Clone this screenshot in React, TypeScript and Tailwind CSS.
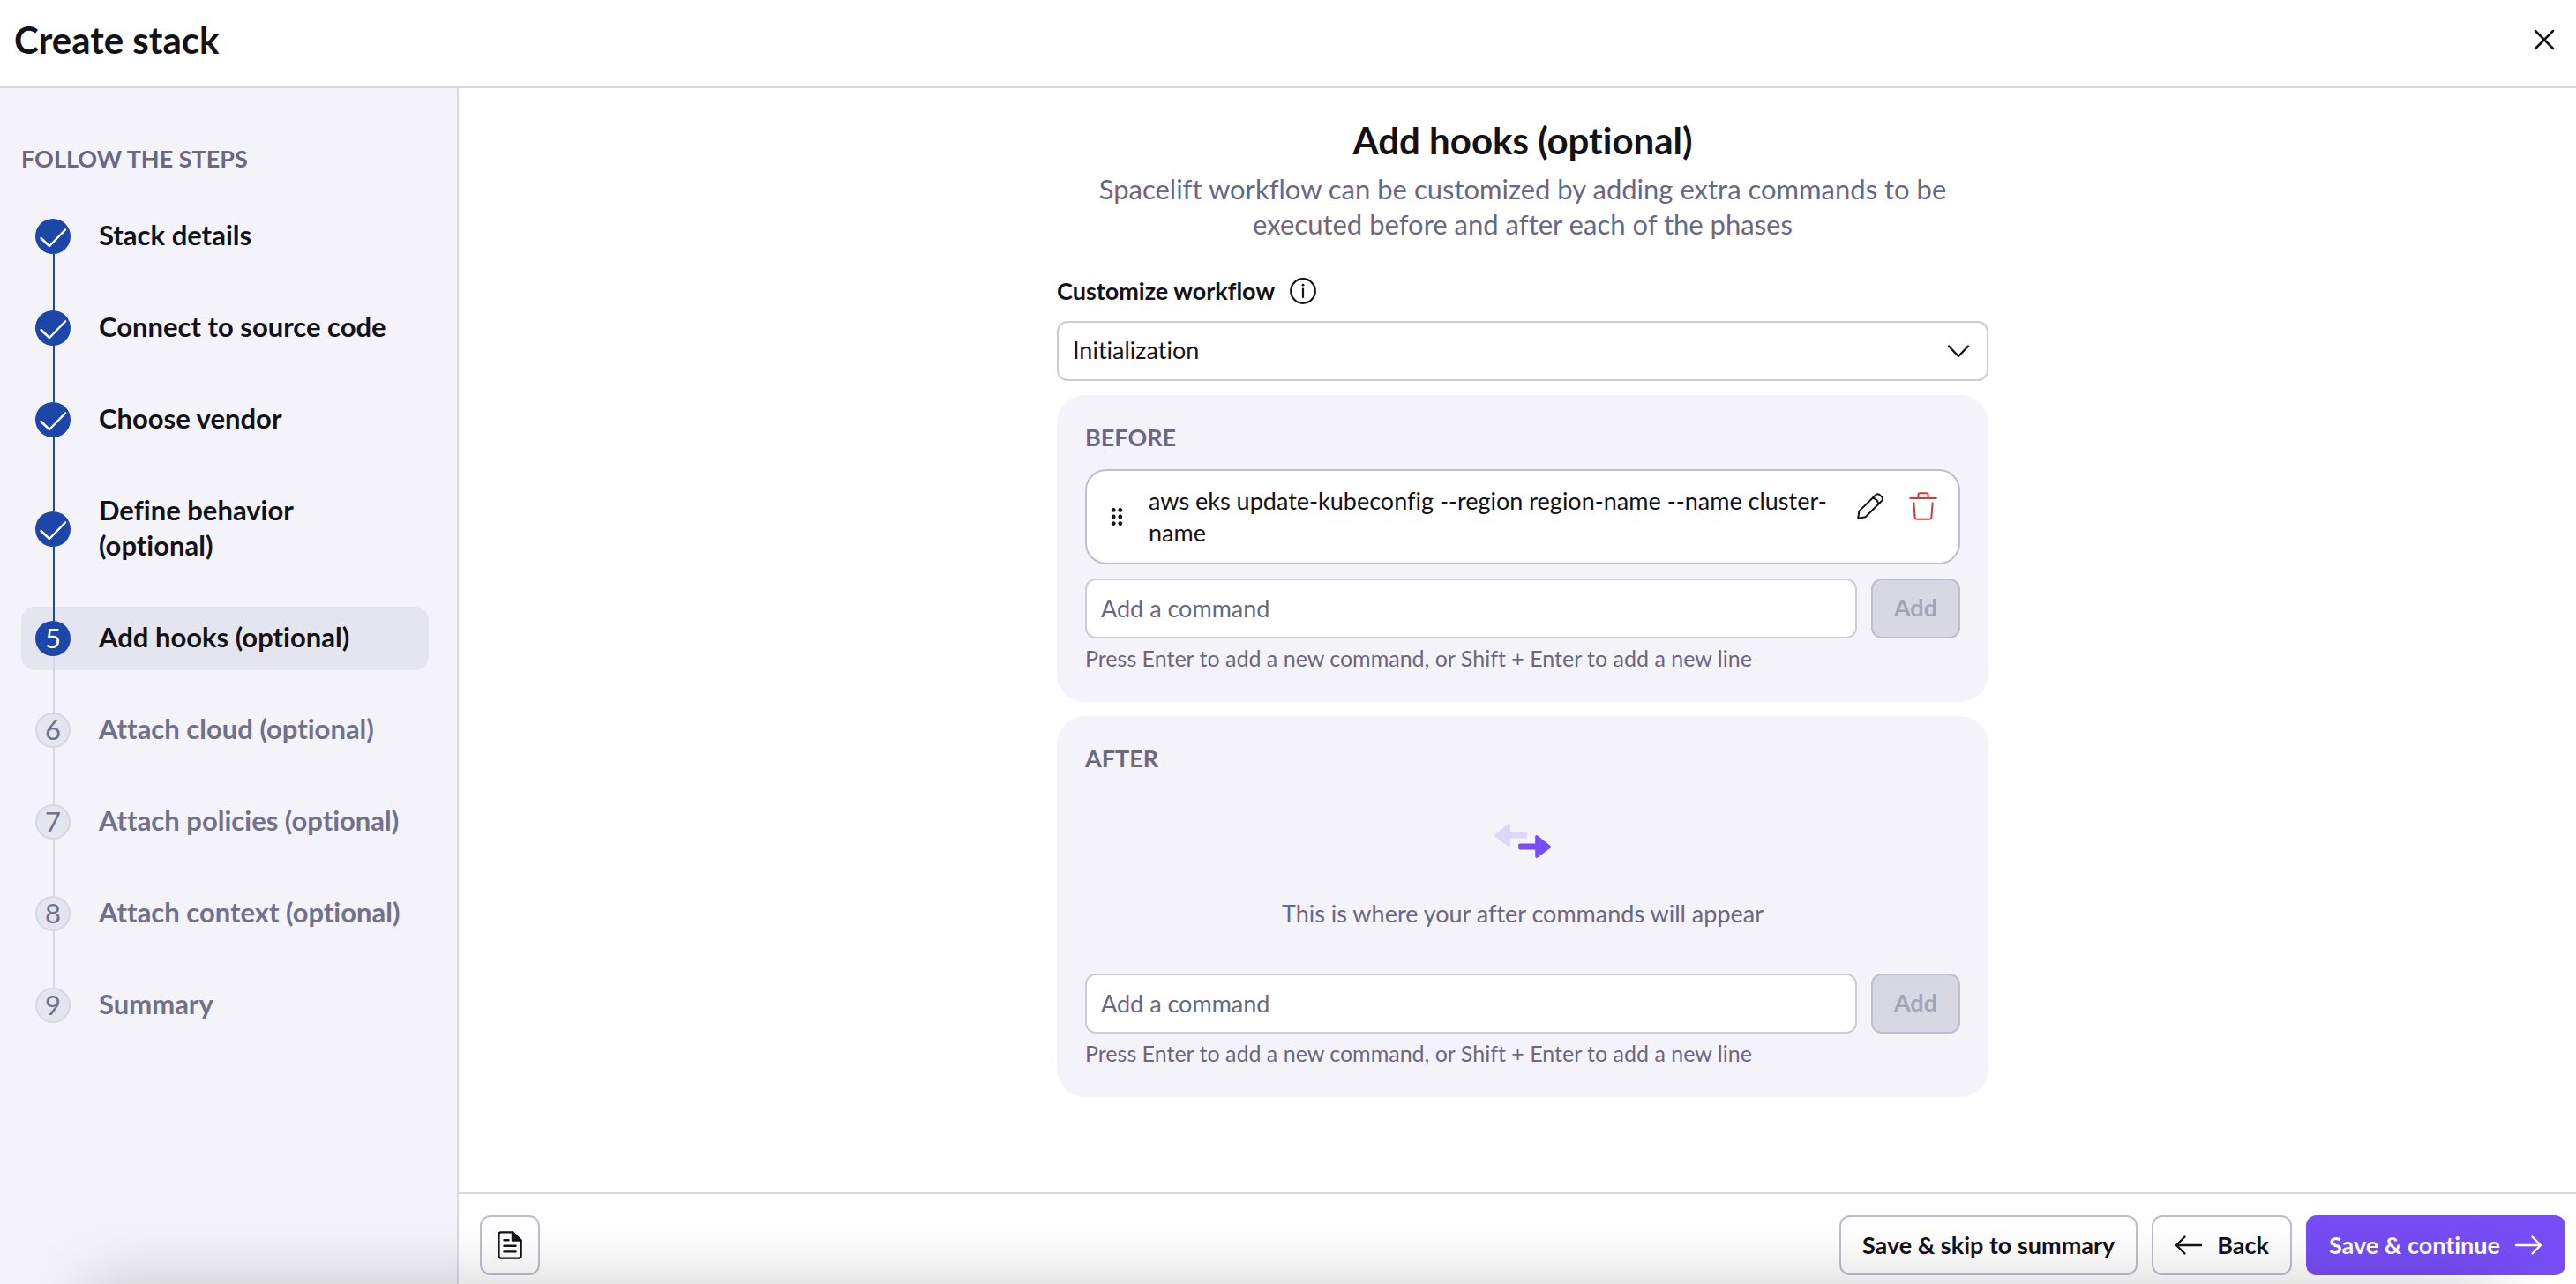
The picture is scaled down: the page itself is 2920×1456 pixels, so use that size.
import type { ReactNode } from "react";

type Step = { label: ReactNode; key: string; state: "done" | "current" | "todo" };

const steps: Step[] = [
  { key: "details", label: "Stack details", state: "done" },
  { key: "source", label: "Connect to source code", state: "done" },
  { key: "vendor", label: "Choose vendor", state: "done" },
  {
    key: "behavior",
    label: (
      <>
        Define behavior
        <br />
        (optional)
      </>
    ),
    state: "done",
  },
  { key: "hooks", label: "Add hooks (optional)", state: "current" },
  { key: "cloud", label: "Attach cloud (optional)", state: "todo" },
  { key: "policies", label: "Attach policies (optional)", state: "todo" },
  { key: "context", label: "Attach context (optional)", state: "todo" },
  { key: "summary", label: "Summary", state: "todo" },
];

const stroke = {
  fill: "none",
  stroke: "currentColor",
  strokeLinecap: "round",
  strokeLinejoin: "round",
} as const;

function CheckIcon() {
  return (
    <svg viewBox="0 0 40 40" className="size-10" strokeWidth="2.5" {...stroke} aria-hidden="true">
      <path d="M6.5 22 16 31 34 12.5" />
    </svg>
  );
}

function CloseIcon() {
  return (
    <svg viewBox="0 0 24 24" className="size-6" strokeWidth="2.5" {...stroke} aria-hidden="true">
      <path d="M2 2 22 22M22 2 2 22" />
    </svg>
  );
}

function InfoIcon() {
  return (
    <svg viewBox="0 0 32 32" className="size-8" strokeWidth="2.2" {...stroke} aria-hidden="true">
      <circle cx="16" cy="16" r="13.8" />
      <path d="M16 13.5V23" />
      <circle cx="16" cy="9.2" r="1.4" fill="currentColor" stroke="none" />
    </svg>
  );
}

function ChevronIcon() {
  return (
    <svg viewBox="0 0 32 32" className="size-8" strokeWidth="2.4" {...stroke} aria-hidden="true">
      <path d="M5 10.5 16 22 27 10.5" />
    </svg>
  );
}

function HandleIcon() {
  return (
    <svg viewBox="0 0 16 24" className="h-6 w-4" fill="currentColor" aria-hidden="true">
      <circle cx="4.2" cy="4.4" r="2.4" />
      <circle cx="11.8" cy="4.4" r="2.4" />
      <circle cx="4.2" cy="12" r="2.4" />
      <circle cx="11.8" cy="12" r="2.4" />
      <circle cx="4.2" cy="19.6" r="2.4" />
      <circle cx="11.8" cy="19.6" r="2.4" />
    </svg>
  );
}

function PencilIcon() {
  return (
    <svg viewBox="0 0 32 32" className="size-8" strokeWidth="2" {...stroke} aria-hidden="true">
      <path d="M2.2 29.8 3.4 21.6 22.2 3.2Q24.4 1.4 26.8 3.2L29 5.4Q31 7.6 29 10L10.6 28.2ZM18.8 6.8Q24 7.6 25.4 13.4" />
    </svg>
  );
}

function TrashIcon() {
  return (
    <svg viewBox="0 0 32 32" className="size-8" strokeWidth="2" {...stroke} aria-hidden="true">
      <path d="M1.2 7H30.8M10.4 6.6V3Q10.4 1.2 12 1.2H20Q21.6 1.2 21.6 3V6.6" />
      <path d="M5.4 12.2 6.6 28.4Q6.9 30.8 9 30.8H23Q25.1 30.8 25.4 28.4L26.6 12.2" />
    </svg>
  );
}

function SwapIcon() {
  return (
    <svg viewBox="0 0 64 40" className="h-10 w-16" aria-hidden="true">
      <path
        fill="#ded7fb"
        d="M.4 12.2 15.4 .4Q18 -.4 18 2V9.6H35.4Q37 9.6 37 11.2V15Q37 16.6 35.4 16.6H18V24.2Q18 26.6 15.4 25.8L.4 14.4Q-.4 13.3 .4 12.2Z"
      />
      <path
        fill="#774df5"
        d="M63.6 25.2 48.6 13.2Q46.2 12.4 46.2 14.8V22.4H28.8Q27.2 22.4 27.2 24V27.8Q27.2 29.4 28.8 29.4H46.2V37Q46.2 39.4 48.6 38.8L63.6 27.4Q64.4 26.3 63.6 25.2Z"
      />
    </svg>
  );
}

function DocIcon() {
  return (
    <svg viewBox="0 0 28 32" className="h-8 w-7" strokeWidth="2.4" {...stroke} aria-hidden="true">
      <path d="M17 1.4H4Q1.4 1.4 1.4 4V28Q1.4 30.6 4 30.6H24Q26.6 30.6 26.6 28V10.5Z" />
      <path d="M17 1.4V10.5H26.6Z" fill="currentColor" />
      <path d="M7.5 10.3H12.5M7.5 16.8H20.5M7.5 23.4H20.5" />
    </svg>
  );
}

function ArrowIcon({ left = false }: { left?: boolean }) {
  return (
    <svg viewBox="0 0 32 32" className="size-8" strokeWidth="2.4" {...stroke} aria-hidden="true">
      {left ? <path d="M2 16H30M11.5 6.5 2 16 11.5 25.5" /> : <path d="M30 16H2M20.5 6.5 30 16 20.5 25.5" />}
    </svg>
  );
}

function StepRow({ step, index }: { step: Step; index: number }) {
  const last = index === steps.length - 1;
  const badge =
    step.state === "todo"
      ? "border-2 border-[#d8d7e4] bg-[#e5e5ef] text-[#72718a]"
      : "bg-[#1c46a8] text-white";
  const above = index === 0 ? "bg-transparent" : step.state === "todo" ? "bg-[#d8d7e4]" : "bg-[#1c46a8]";
  const below = last ? "bg-transparent" : step.state === "done" ? "bg-[#1c46a8]" : "bg-[#d8d7e4]";
  return (
    <li aria-current={step.state === "current" ? "step" : undefined}>
      <div className={`flex rounded-2xl px-4 ${step.state === "current" ? "bg-[#e5e5ef]" : ""}`}>
        <div className="flex w-10 shrink-0 flex-col">
          <span className={`ml-5 w-0.5 flex-1 ${above}`} />
          <span
            className={`flex size-10 items-center justify-center rounded-full text-[31px] leading-9 ${badge}`}
          >
            {step.state === "done" ? <CheckIcon /> : <span className="pb-0.5">{index + 1}</span>}
          </span>
          <span className={`ml-5 w-0.5 flex-1 ${below}`} />
        </div>
        <span
          className={`ml-8 pt-3.5 pb-4.5 text-[31px] leading-10 font-bold ${
            step.state === "todo" ? "text-[#72718a]" : "text-[#121217]"
          }`}
        >
          {step.label}
        </span>
      </div>
      {!last && <div className={`ml-9 h-8 w-0.5 ${below}`} />}
    </li>
  );
}

function CommandForm({ id }: { id: string }) {
  return (
    <form onSubmit={(e) => e.preventDefault()}>
      <div className="flex gap-4">
        <input
          type="text"
          aria-label={`Add a command to run ${id}`}
          aria-describedby={`${id}-hint`}
          placeholder="Add a command"
          className="h-17 min-w-0 flex-1 rounded-xl border-2 border-[#cdccd5] bg-white px-4 pb-0.5 text-[27px] placeholder:text-[#696880] placeholder:opacity-100"
        />
        <button
          type="submit"
          disabled
          className="h-17 rounded-xl border-2 border-[#bfbdcf] bg-[#d8d8e4] px-6 pb-0.5 text-[27px] font-bold text-[#a5a4b6]"
        >
          Add
        </button>
      </div>
      <p id={`${id}-hint`} className="mt-1.5 pb-0.5 text-[25px] leading-8 text-[#696880]">
        Press Enter to add a new command, or Shift + Enter to add a new line
      </p>
    </form>
  );
}

function HookPanel({ title, children }: { title: string; children: ReactNode }) {
  return (
    <section className="mt-4 rounded-4xl bg-[#f4f3f9] px-8 pt-[30px] pb-8">
      <h2 className="pb-0.5 text-[27px] leading-9 font-bold text-[#696880] uppercase">{title}</h2>
      {children}
    </section>
  );
}

export default function App() {
  const outline =
    "flex h-17 items-center justify-center gap-4 rounded-xl border-2 border-[#bfbdcf] bg-white text-[27px] font-bold";
  return (
    <div className="relative flex min-h-screen flex-col overflow-hidden bg-white font-['Lato',sans-serif] text-[#121217] [font-variant-ligatures:none]">
      <header className="flex items-center justify-between border-b-2 border-[#d9d8e6] pt-4 pr-6 pb-6 pl-4">
        <h1 className="text-[42px] leading-[58px] font-bold">Create stack</h1>
        <button type="button" aria-label="Close" className="flex size-6">
          <CloseIcon />
        </button>
      </header>

      <div className="flex flex-1">
        <aside className="w-[520px] shrink-0 border-r-2 border-[#d9d8e6] bg-[#f4f3f9] pt-[62px] pr-8 pl-6">
          <h2 className="pb-0.5 text-[27px] leading-9 font-bold text-[#696880] uppercase">Follow the steps</h2>
          <ol className="mt-8">
            {steps.map((step, i) => (
              <StepRow key={step.key} step={step} index={i} />
            ))}
          </ol>
        </aside>

        <div className="flex min-w-0 flex-1 flex-col">
          <main className="flex flex-1 justify-center pt-[30px] pl-3">
            <div className="w-full max-w-[1056px]">
              <h2 className="text-center text-[42px] leading-[58px] font-bold">Add hooks (optional)</h2>
              <p className="mt-1.5 text-center text-[31px] leading-10 text-[#696880]">
                Spacelift workflow can be customized by adding extra commands to be
                <br />
                executed before and after each of the phases
              </p>

              <div className="mt-[38px] flex items-center gap-4">
                <label htmlFor="workflow" className="text-[27px] leading-9 font-bold">
                  Customize workflow
                </label>
                <button type="button" aria-label="About workflow phases">
                  <InfoIcon />
                </button>
              </div>
              <div className="relative mt-4">
                <select
                  id="workflow"
                  className="block h-17 w-full appearance-none rounded-xl border-2 border-[#cdccd5] bg-white px-4 pb-0.5 text-[27px]"
                >
                  <option>Initialization</option>
                </select>
                <span className="pointer-events-none absolute top-1/2 right-4.5 -translate-y-1/2">
                  <ChevronIcon />
                </span>
              </div>

              <HookPanel title="Before">
                <div className="my-4 flex rounded-3xl border-2 border-[#bfbdcf] bg-white px-6 py-4">
                  <button type="button" aria-label="Reorder command" className="mr-7 ml-0.5 self-center">
                    <HandleIcon />
                  </button>
                  <p className="min-w-0 flex-1 text-[27px] leading-9">
                    aws eks update-kubeconfig --region region-name --name cluster-
                    <br />
                    name
                  </p>
                  <div className="flex gap-7 self-start pt-2">
                    <button type="button" aria-label="Edit command">
                      <PencilIcon />
                    </button>
                    <button type="button" aria-label="Delete command" className="text-[#d23b35]">
                      <TrashIcon />
                    </button>
                  </div>
                </div>
                <CommandForm id="before" />
              </HookPanel>

              <HookPanel title="After">
                <div className="flex flex-col items-center gap-11 pt-[54px] pb-[50px]">
                  <SwapIcon />
                  <p className="text-[27px] leading-9 text-[#696880]">
                    This is where your after commands will appear
                  </p>
                </div>
                <CommandForm id="after" />
              </HookPanel>
            </div>
          </main>

          <footer className="flex gap-4 border-t-2 border-[#d9d8e6] pt-6 pr-3 pb-[10px] pl-6">
            <button type="button" aria-label="Open documentation" className={`w-17 ${outline}`}>
              <DocIcon />
            </button>
            <button type="button" className={`ml-auto px-6 ${outline}`}>
              Save &amp; skip to summary
            </button>
            <button type="button" className={`px-6 ${outline}`}>
              <ArrowIcon left />
              Back
            </button>
            <button
              type="button"
              className="flex h-17 items-center gap-4 rounded-xl bg-[#774df5] px-[26px] text-[27px] font-bold text-white"
            >
              Save &amp; continue
              <ArrowIcon />
            </button>
          </footer>
        </div>
      </div>

      <div className="pointer-events-none absolute right-[90px] -bottom-40 left-[100px] h-40 shadow-[0_0_80px_0_rgba(0,0,0,0.2)]" />
    </div>
  );
}
